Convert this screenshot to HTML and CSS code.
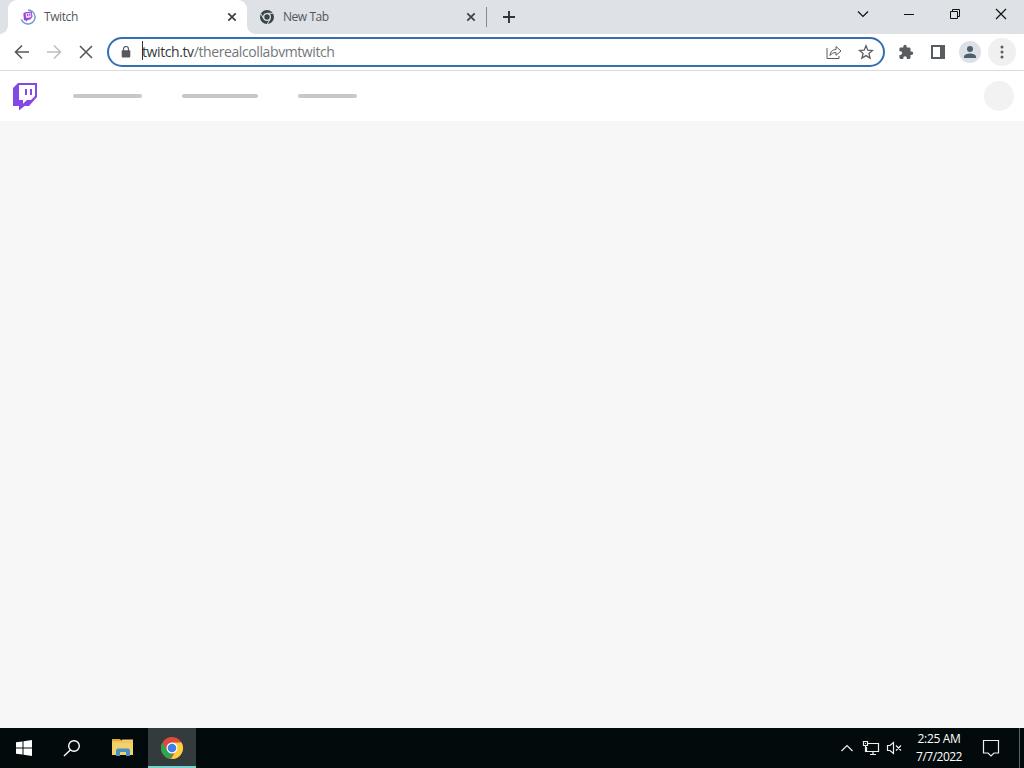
FILE: index.html
```
<!DOCTYPE html>
<html lang="en">
<head>
<meta charset="utf-8">
<title>Twitch</title>
<link rel="stylesheet" href="styles.css">
</head>
<body>
<div class="screen">
  <header class="tabstrip">
    <div class="tab active">
      <svg class="favicon" viewBox="0 0 16 16" fill="none"><path d="M8 1a7 7 0 1 1-6.600 9.200" stroke="#729bd0" stroke-width="1.500"/><path d="M3.300 4.500 5 3.200l6.700-.8.900 5.200-2.300 2.900-2.600.4-1.600 1.800-.5-1.500-1.600.1z" fill="#9b45dc"/><path d="m5.500 4.400 5.300-.7.600 3.500-1.400 1.400-3.800.5z" fill="#eee2fb"/><path d="m7.500 5 .3 2M9.600 4.700l.3 2" stroke="#8b3bd0"/></svg>
      <span class="tab-title twitch-tab">Twitch</span>
      <svg class="tab-close" viewBox="0 0 10 10"><path d="m1.300 1.300 7.400 7.400m0-7.400L1.300 8.700" stroke="#3c4043" stroke-width="1.700"/></svg>
    </div>
    <div class="tab">
      <svg class="favicon" viewBox="0 0 16 16" fill="none"><circle cx="8" cy="8" r="5.500" stroke="#3a454b" stroke-width="3"/><circle cx="8" cy="8" r="2.700" fill="#3a454b"/><path d="M8 4.300h6M4.800 9.900 1.900 4.900M11.200 9.900 8.300 15" stroke="#dee1e6" stroke-width="1"/></svg>
      <span class="tab-title">New Tab</span>
      <svg class="tab-close" viewBox="0 0 10 10"><path d="m1.300 1.300 7.400 7.400m0-7.400L1.300 8.700" stroke="#3c4043" stroke-width="1.700"/></svg>
    </div>
    <i class="divider"></i>
    <svg class="plus" viewBox="0 0 12 12"><path d="M6 0v12M0 6h12" stroke="#303438" stroke-width="1.900"/></svg>
    <div class="window-buttons">
      <svg viewBox="0 0 12 12"><path d="m1 3.500 5 5 5-5" stroke-width="1.200"/></svg>
      <svg viewBox="0 0 12 12"><path d="M1 6.500h10"/></svg>
      <svg viewBox="0 0 12 12"><path d="M1.500 3.500h7v7h-7zM3.500 3.500v-2h7v7h-2"/></svg>
      <svg viewBox="0 0 12 12"><path d="m1 1 10 10M11 1 1 11" stroke-width="1.200"/></svg>
    </div>
  </header>
  <nav class="toolbar">
    <svg class="nav-icon" viewBox="0 0 16 16"><path d="M15 8H2m6-6.500L1.500 8 8 14.500" stroke="#55585b"/></svg>
    <svg class="nav-icon" viewBox="0 0 16 16"><path d="M1 8h13M8 1.500 14.500 8 8 14.500" stroke="#bdbfc1"/></svg>
    <svg class="nav-icon" viewBox="0 0 16 16"><path d="m2 2 12 12M14 2 2 14" stroke="#55585b"/></svg>
    <div class="omnibox">
      <svg class="lock" viewBox="0 0 10 12"><path d="M2.500 5V3a2.500 2.500 0 0 1 5 0v2" fill="none" stroke="#565a5e" stroke-width="1.200"/><rect x=".7" y="4.300" width="8.600" height="7.300" rx="1" fill="#565a5e"/></svg>
      <i class="caret"></i>
      <span class="url"><b>twitch.tv</b>/therealcollabvmtwitch</span>
      <svg class="share" viewBox="0 0 16 14"><path d="M1 3v10.500h12V11M4 10.500c.5-4 2.700-6 6-6V1.500L15 6l-5 4.300V7.500c-2.700 0-4.500 1-6 3z"/></svg>
      <svg class="star" viewBox="0 0 16 16"><path d="m8 1.800 1.800 4.400 4.700.3-3.600 3 1.200 4.600L8 11.600l-4.100 2.500 1.200-4.600-3.600-3 4.700-.3z"/></svg>
    </div>
    <svg class="action puzzle" viewBox="0 0 16 16"><path d="M13.500 7.500h-1V4.800c0-.7-.6-1.300-1.300-1.300H8.700v-1a1.700 1.700 0 0 0-3.400 0v1H2.700c-.7 0-1.300.6-1.300 1.300v2.500h1a1.800 1.800 0 0 1 0 3.600h-1v2.700c0 .7.6 1.300 1.300 1.300h2.600v-1a1.700 1.700 0 0 1 3.500 0v1h2.400c.7 0 1.300-.6 1.300-1.300V11h1a1.750 1.750 0 0 0 0-3.500z" fill="#5a5d60"/></svg>
    <svg class="action panel" viewBox="0 0 16 16"><path d="M1 1h14v14H1zM3 3v10h7V3z" fill="#5a5d60" fill-rule="evenodd"/></svg>
    <span class="round avatar"><svg viewBox="0 0 14 14"><circle cx="7" cy="3.900" r="3" fill="#4b5f70"/><path d="M1 13v-1.500C1 9.500 4.500 8.400 7 8.400s6 1.100 6 3.100V13z" fill="#4b5f70"/></svg></span>
    <span class="round menu"><svg viewBox="0 0 4 14" fill="#5a5d60"><circle cx="2" cy="2" r="1.500"/><circle cx="2" cy="7" r="1.500"/><circle cx="2" cy="12" r="1.500"/></svg></span>
  </nav>
  <section class="site-header">
    <svg class="twitch" viewBox="0 0 26 28"><path d="M6 0h19v14L17 23h-4.500L7 27.500v-4.500H1V5z" fill="#8548e4"/><path d="M7 2h16v11l-4 4h-4l-4 3.700V17H7z" fill="#fff"/><path d="M14 6v6M19 6v6" stroke="#8548e4" stroke-width="2"/></svg>
    <i class="skeleton first"></i><i class="skeleton second"></i><i class="skeleton third"></i>
    <i class="profile"></i>
  </section>
  <main class="content"></main>
  <footer class="taskbar">
    <span class="task"><svg class="start" viewBox="0 0 16 16" fill="#fff"><path d="M0 2.300 6.500 1.400v6.100H0zM7.500 1.200 16 0v7.500H7.500zM0 8.500h6.500v6.100L0 13.700zM7.500 8.500H16V16l-8.500-1.200z"/></svg></span>
    <span class="task"><svg class="search" viewBox="0 0 18 18" fill="none" stroke="#fff" stroke-width="1.400"><circle cx="11" cy="7" r="5.300"/><path d="m7.300 10.900-6.300 6"/></svg></span>
    <span class="task files"><svg class="folder" viewBox="0 0 22 20"><path d="M0 1h8l2 2H0z" fill="#e4a934"/><path d="M0 3h9l1.500-1.500H21V17H0z" fill="#f2d06a"/><path d="M0 4h21" stroke="#e9b84a" stroke-width=".7"/><path d="M4 18v-6l1.500-1.500h11L18 12v6h-4v-4H8v4z" fill="#488fc5"/></svg></span>
    <span class="task running"><svg class="chrome" viewBox="0 0 24 24"><circle cx="12" cy="12" r="11" fill="#dd4b3e"/><path d="M2.500 6.500 7.200 14.800 12 17.500l-1 5.500A11 11 0 0 1 2.500 6.500z" fill="#2da650"/><path d="M12 6.500h9.500A11 11 0 0 1 11 23l5-8.500z" fill="#fcd03c"/><circle cx="12" cy="12" r="5.500" fill="#fff"/><circle cx="12" cy="12" r="4.300" fill="#3e7fea"/></svg></span>
    <div class="tray">
      <svg class="chevron" viewBox="0 0 14 8"><path d="m1.500 7 5.500-5.500L12.500 7"/></svg>
      <svg class="network" viewBox="0 0 18 16"><path d="M6 3.500h10.500v8H4.500V7M8 14.500h6M11 11.500v3M1.500 1.500h4v4h-4zM3.500 5.500v6h1M3 3.500h1"/></svg>
      <svg class="sound" viewBox="0 0 16 16"><path d="M1.500 5.500H4l3.500-3v11l-3.500-3H1.500zM10 5.500l5 5m0-5-5 5"/></svg>
      <div class="clock"><span class="time">2:25 AM</span><span class="date">7/7/2022</span></div>
      <svg class="notice" viewBox="0 0 18 18"><path d="M1.500 1.500h15v12.500H12L9 17l-3-3H1.500z"/></svg>
      <i class="desktop-edge"></i>
    </div>
  </footer>
</div>
</body>
</html>
```
FILE: styles.css
```
* { box-sizing: border-box; }
body { margin: 0; font-family: "Open Sans", "Noto Sans", sans-serif; }
svg { display: block; flex: none; }
i { display: block; flex: none; }
.screen { width: 1024px; height: 768px; display: flex; flex-direction: column; background: #fff; overflow: hidden; }
.tabstrip { height: 34px; flex: none; display: flex; align-items: center; padding-left: 8px; background: #dee1e6; }
.tab { width: 239px; height: 34px; display: flex; align-items: center; padding: 0 11px 0 12px; color: #53575b; }
.tab.active { background: #fff; border-radius: 9px 9px 0 0; position: relative; }
.tab.active::before, .tab.active::after { content: ""; position: absolute; bottom: 0; width: 8px; height: 8px; }
.tab.active::before { left: -8px; background: radial-gradient(circle at 0 0, transparent 7.5px, #fff 8px); }
.tab.active::after { right: -8px; background: radial-gradient(circle at 100% 0, transparent 7.5px, #fff 8px); }
.favicon { width: 16px; height: 16px; margin-right: 8px; }
.tab-title { font-size: 12px; line-height: 18px; margin-right: auto; letter-spacing: -.45px; }
.twitch-tab { letter-spacing: -.4px; }
.tab-close { width: 10px; height: 10px; margin-right: -1px; }
.divider { width: 1px; height: 20px; background: #85898e; }
.plus { width: 12px; height: 12px; margin-left: 16px; }
.window-buttons { display: flex; gap: 34px; margin: -6px 17px 0 auto; }
.window-buttons svg { width: 12px; height: 12px; fill: none; stroke: #111; stroke-width: 1; }
.toolbar { height: 37px; flex: none; display: flex; align-items: center; padding: 0 8px 0 14px; background: #fff; border-bottom: 1px solid #dadbdc; }
.nav-icon { width: 16px; height: 16px; margin-right: 16px; fill: none; stroke-width: 1.6; }
.omnibox { width: 778px; height: 30px; margin-left: -3px; display: flex; align-items: center; border: 2px solid #346fb5; border-radius: 15px; padding: 0 9px 0 12px; }
.lock { width: 10px; height: 12px; }
.caret { width: 1px; height: 19px; background: #333; margin: -3px -1px 0 11px; }
.url { color: #74777a; font-size: 14px; line-height: 20px; letter-spacing: -.4px; margin: 0 auto 0 0; white-space: nowrap; }
.url b { color: #35383b; font-weight: 400; }
.share { width: 16px; height: 14px; margin-right: 16px; }
.star { width: 16px; height: 16px; }
.share, .star { fill: none; stroke: #5a5d60; stroke-width: 1.3; }
.share { stroke-width: 1; }
.action { width: 16px; height: 16px; }
.puzzle { margin-left: 13px; }
.panel { margin-left: 16px; }
.round { display: grid; place-items: center; border-radius: 50%; flex: none; }
.avatar { width: 22px; height: 22px; background: #dde1e6; margin-left: 13px; }
.avatar svg { width: 14px; height: 14px; }
.menu { width: 28px; height: 28px; background: #f0f0f0; margin-left: 7px; }
.menu svg { width: 4px; height: 14px; }
.site-header { height: 50px; flex: none; display: flex; align-items: center; padding: 0 10px 0 12px; }
.twitch { width: 26px; height: 28px; margin-top: 2px; }
.skeleton { height: 4px; background: #c8c8cb; border-radius: 2px; }
.first { width: 69px; margin-left: 35px; }
.second { width: 76px; margin-left: 40px; }
.third { width: 59px; margin-left: 40px; }
.profile { width: 30px; height: 30px; border-radius: 50%; background: #f2f2f2; margin-left: auto; }
.content { flex: 1; background: #f7f7f7; }
.taskbar { height: 40px; flex: none; display: flex; background: #020a0c; }
.task { width: 48px; display: grid; place-items: center; }
.files { width: 52px; padding-left: 2px; }
.running { background: #343b3c; border-bottom: 2px solid #76d3d0; padding-top: 2px; }
.start { width: 16px; height: 16px; }
.search { width: 18px; height: 18px; }
.folder { width: 22px; height: 20px; }
.chrome { width: 24px; height: 24px; }
.tray { display: flex; align-items: center; margin-left: auto; color: #fff; }
.tray svg { fill: none; stroke: #eee; stroke-width: 1.2; }
.chevron { width: 14px; height: 8px; margin-right: 8px; }
.network { width: 18px; height: 16px; margin-right: 6px; }
.sound { width: 16px; height: 16px; margin-right: 13px; }
.clock { width: 48px; display: flex; flex-direction: column; align-items: center; font-size: 12px; line-height: 18px; white-space: nowrap; }
.time { letter-spacing: -.35px; }
.date { letter-spacing: -.5px; }
.notice { width: 18px; height: 18px; margin: 0 19px 0 19px; }
.desktop-edge { width: 1px; height: 40px; background: #596163; margin-right: 4px; }
```
